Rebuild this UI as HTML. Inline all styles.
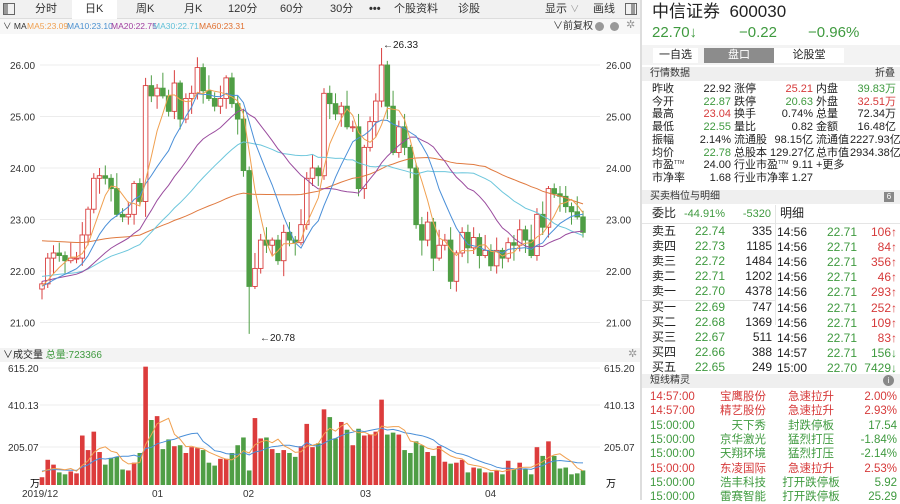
<!DOCTYPE html>
<html><head><meta charset="utf-8">
<style>
*{margin:0;padding:0;box-sizing:border-box}
body{width:900px;height:500px;overflow:hidden;background:#fff;font-family:"Liberation Sans","Noto Sans CJK SC",sans-serif;font-size:11px;color:#222;position:relative;line-height:13px}
.a{position:absolute;white-space:nowrap;line-height:13px}
.r{text-align:right}
.g{color:#3f9a3f}.red{color:#d63a3a}
.tm{font-size:5px;line-height:0;position:relative;top:-4px}
#tb{position:absolute;left:0;top:0;width:640px;height:19px;background:#f1f1f1;border-bottom:1px solid #ddd}
#tb span{position:absolute;top:3px;font-size:11px;color:#333;line-height:13px}
#mab{position:absolute;left:0;top:19px;width:640px;height:15px;background:#f7f7f7;font-size:8.5px}
#mab .a{top:2px;line-height:11px}
.hd{position:absolute;left:642px;width:258px;height:14px;background:#efefef;font-size:10px;color:#333;padding-left:8px;line-height:14px}
</style></head><body>
<div id="tb">
<div class="a" style="left:3px;top:3px;width:12px;height:12px;border:1px solid #666"></div><div class="a" style="left:4px;top:4px;width:4px;height:10px;background:#999"></div>
<div class="a" style="left:72px;top:0;width:45px;height:19px;background:#fff"></div>
<span style="left:35px">分时</span><span style="left:85px">日K</span><span style="left:136px">周K</span><span style="left:184px">月K</span><span style="left:228px">120分</span><span style="left:280px">60分</span><span style="left:330px">30分</span><span style="left:369px;font-weight:bold">•••</span><span style="left:394px">个股资料</span><span style="left:458px">诊股</span><span style="left:545px">显示 <small style="color:#999">∨</small></span><span style="left:593px">画线</span>
<div class="a" style="left:625px;top:3px;width:12px;height:12px;border:1px solid #666"></div><div class="a" style="left:631px;top:4px;width:4px;height:10px;background:#999"></div>
</div>
<div id="mab">
<span class="a" style="left:3px;color:#333">∨ MA</span>
<span class="a" style="left:27px;color:#f0a050">MA5:23.09</span>
<span class="a" style="left:67px;color:#4a90d0">MA10:23.10</span>
<span class="a" style="left:111px;color:#a040a0">MA20:22.75</span>
<span class="a" style="left:153px;color:#60c0d8">MA30:22.71</span>
<span class="a" style="left:199px;color:#e07030">MA60:23.31</span>
<span class="a" style="left:553px;color:#333;font-size:10px">∨前复权</span>
<span class="a" style="left:595px;top:3px;width:9px;height:9px;border-radius:50%;background:#999"></span>
<span class="a" style="left:610px;top:3px;width:9px;height:9px;border-radius:50%;background:#999"></span>
<span class="a" style="left:626px;top:1px;color:#999;font-size:11px">✲</span>
</div>
<svg id="ch" class="a" style="left:0;top:0" width="640" height="500"></svg>
<div class="a" style="left:0;top:348px;width:640px;height:14px;background:#f3f3f3"></div>
<span class="a" style="left:3px;top:349px;font-size:10px">∨成交量 <span class="g">总量:723366</span></span>
<span class="a" style="left:628px;top:348px;color:#999">✲</span>
<div class="a" style="left:640px;top:0;width:2px;height:500px;background:#ddd"></div>

<div class="a" style="left:652px;top:2px;font-size:17px;line-height:20px">中信证券&nbsp;&nbsp;600030</div>
<div class="a g" style="left:652px;top:24px;font-size:15px;line-height:18px">22.70↓</div>
<div class="a g" style="left:739px;top:24px;font-size:15px;line-height:18px">−0.22</div>
<div class="a g" style="left:808px;top:24px;font-size:15px;line-height:18px">−0.96%</div>
<div class="a" style="left:642px;top:45px;width:258px;height:20px;background:#f3f3f3"></div>
<div class="a" style="left:653px;top:48px;width:45px;height:15px;background:#fff;font-size:11px;text-align:center;line-height:15px">一自选</div>
<div class="a" style="left:704px;top:48px;width:70px;height:15px;background:#8c8c8c;color:#fff;font-size:11px;text-align:center;line-height:15px">盘口</div>
<div class="a" style="left:774px;top:48px;width:70px;height:15px;background:#fff;font-size:11px;text-align:center;line-height:15px">论股堂</div>
<div class="hd" style="top:67px">行情数据<span style="position:absolute;right:5px">折叠</span></div>
<div id="dt"></div>
<div class="hd" style="top:190px">买卖档位与明细<span style="position:absolute;right:6px;top:2px;width:10px;height:10px;background:#888;color:#fff;font-size:8px;line-height:10px;text-align:center">6</span></div>
<div class="a" style="left:775px;top:205px;width:1px;height:120px;background:#e5e5e5"></div>
<div class="a" style="left:642px;top:223px;width:258px;height:1px;background:#e5e5e5"></div>
<div class="a" style="left:642px;top:300px;width:133px;height:1px;background:#e5e5e5"></div>
<div id="ob"></div>
<div class="hd" style="top:374px">短线精灵<span style="position:absolute;right:6px;top:1px;width:11px;height:11px;border-radius:50%;background:#888;color:#fff;font-size:8px;line-height:11px;text-align:center">i</span></div>
<div id="se"></div>

<script>
function el(h,p){var d=document.createElement('div');d.innerHTML=h;document.getElementById(p).appendChild(d);}
var rows=[["昨收","22.92","","涨停","25.21","red","内盘","39.83万","g"],["今开","22.87","g","跌停","20.63","g","外盘","32.51万","red"],["最高","23.04","red","换手","0.74%","","总量","72.34万",""],["最低","22.55","g","量比","0.82","","金额","16.48亿",""],["振幅","2.14%","","流通股","98.15亿","","流通值","2227.93亿",""],["均价","22.78","g","总股本","129.27亿","","总市值","2934.38亿",""],["市盈<span class='tm'>TTM</span>","24.00","","行业市盈<span class='tm'>TTM</span>","9.11","","+更多","",""],["市净率","1.68","","行业市净率","1.27","","","",""]];
var h='';rows.forEach(function(r,i){var y=83+i*12.7;var st='line-height:12px;top:'+y+'px';
h+='<span class="a" style="left:652px;'+st+'">'+r[0]+'</span><span class="a r '+r[2]+'" style="left:690px;width:41px;'+st+'">'+r[1]+'</span>';
h+='<span class="a" style="left:734px;'+st+'">'+r[3]+'</span><span class="a r '+r[5]+'" style="left:770px;width:43px;'+st+'">'+r[4]+'</span>';
h+='<span class="a" style="left:816px;'+st+'">'+r[6]+'</span><span class="a r '+r[8]+'" style="left:850px;width:46px;'+st+'">'+r[7]+'</span>';});
el(h,'dt');
var ob=[["卖五","22.74","335","14:56","22.71","106↑"],["卖四","22.73","1185","14:56","22.71","84↑"],["卖三","22.72","1484","14:56","22.71","356↑"],["卖二","22.71","1202","14:56","22.71","46↑"],["卖一","22.70","4378","14:56","22.71","293↑"],["买一","22.69","747","14:56","22.71","252↑"],["买二","22.68","1369","14:56","22.71","109↑"],["买三","22.67","511","14:56","22.71","83↑"],["买四","22.66","388","14:57","22.71","156↓"],["买五","22.65","249","15:00","22.70","7429↓"]];
h='<span class="a" style="left:652px;top:207px;font-size:12px">委比</span><span class="a g" style="left:684px;top:208px">-44.91%</span><span class="a g r" style="left:730px;width:41px;top:208px">-5320</span><span class="a" style="left:780px;top:207px;font-size:12px">明细</span>';
ob.forEach(function(r,i){var y=225+i*15.1;var c=r[5].indexOf('↑')>0?'red':'g';
h+='<span class="a" style="left:652px;top:'+y+'px;font-size:12px">'+r[0]+'</span><span class="a g" style="left:695px;top:'+y+'px;font-size:12px">'+r[1]+'</span><span class="a r" style="left:730px;width:42px;top:'+y+'px;font-size:12px">'+r[2]+'</span><span class="a" style="left:777px;top:'+(y+1)+'px;font-size:12px">'+r[3]+'</span><span class="a g" style="left:827px;top:'+(y+1)+'px;font-size:12px">'+r[4]+'</span><span class="a r '+c+'" style="left:855px;width:42px;top:'+(y+1)+'px;font-size:12px">'+r[5]+'</span>';});
el(h,'ob');
var se=[["14:57:00","宝鹰股份","急速拉升","2.00%","red"],["14:57:00","精艺股份","急速拉升","2.93%","red"],["15:00:00","天下秀","封跌停板","17.54","g"],["15:00:00","京华激光","猛烈打压","-1.84%","g"],["15:00:00","天翔环境","猛烈打压","-2.14%","g"],["15:00:00","东凌国际","急速拉升","2.53%","red"],["15:00:00","浩丰科技","打开跌停板","5.92","g"],["15:00:00","雷赛智能","打开跌停板","25.29","g"]];
h='';se.forEach(function(r,i){var y=391+i*14.3;
h+='<span class="a '+r[4]+'" style="left:650px;top:'+y+'px;font-size:11.5px">'+r[0]+'</span><span class="a r '+r[4]+'" style="left:700px;width:66px;top:'+y+'px;font-size:11.5px">'+r[1]+'</span><span class="a '+r[4]+'" style="left:776px;width:70px;text-align:center;top:'+y+'px;font-size:11.5px">'+r[2]+'</span><span class="a r '+r[4]+'" style="left:850px;width:47px;top:'+y+'px;font-size:11.5px">'+r[3]+'</span>';});
el(h,'se');

var C=[21.75,22.25,22.35,22.3,22.2,22.25,22.25,22.7,23.2,23.8,23.85,23.8,23.6,23.1,23.05,23.1,23.7,23.35,25.6,25.4,25.55,25.4,25.1,25.65,24.95,25.35,25.45,25.95,25.5,25.35,25.2,25.35,25.75,25.25,24.95,23.95,21.7,22.05,22.6,22.5,22.6,22.2,22.75,22.6,22.55,22.9,23.8,24.0,23.85,25.45,25.25,25.05,25.2,24.8,24.8,23.6,24.4,24.9,25.3,26.0,25.2,24.3,24.8,24.4,24.0,22.9,22.6,22.95,22.25,22.5,22.6,21.8,22.35,22.75,22.45,22.65,22.3,22.4,22.1,22.4,22.25,22.55,22.5,22.8,22.6,22.3,23.1,22.85,23.6,23.5,23.45,23.25,23.15,23.05,22.75];
var V=[8,26,21,13,11,14,12,51,36,55,34,21,28,29,16,15,23,33,122,67,71,37,47,40,41,33,39,38,36,23,20,27,27,33,41,49,15,69,48,49,37,33,36,33,29,40,63,39,43,78,70,48,65,57,41,58,51,52,55,88,52,54,52,36,33,45,41,34,30,40,24,22,23,26,13,18,17,13,13,15,11,25,16,23,17,11,39,30,45,30,17,18,11,12,15];
var n=C.length,x0=42,x1=583,st=(x1-x0)/(n-1);
function X(i){return x0+i*st}function Y(p){return 65+(26-p)*51.5}
var s='';
[26,25,24,23,22,21].forEach(function(p){var y=Y(p);s+='<line x1="40" x2="600" y1="'+y+'" y2="'+y+'" stroke="#ececec"/><text x="10" y="'+(y+4)+'" font-size="10" fill="#333">'+p.toFixed(2)+'</text><text x="606" y="'+(y+4)+'" font-size="10" fill="#333">'+p.toFixed(2)+'</text>';});
[[368,"615.20"],[405,"410.13"],[447,"205.07"]].forEach(function(a){s+='<line x1="40" x2="600" y1="'+a[0]+'" y2="'+a[0]+'" stroke="#ececec"/><text x="8" y="'+(a[0]+4)+'" font-size="10" fill="#333">'+a[1]+'</text><text x="604" y="'+(a[0]+4)+'" font-size="10" fill="#333">'+a[1]+'</text>';});
s+='<text x="30" y="487" font-size="10">万</text><text x="606" y="487" font-size="10">万</text>';
[[22,"2019/12"],[152,"01"],[243,"02"],[360,"03"],[485,"04"]].forEach(function(a){s+='<text x="'+a[0]+'" y="497" font-size="10" fill="#333">'+a[1]+'</text>';});
var dy=[.05,.1,.15,.2,.08,.3,.12,.25];
var rc='#d94040',gc='#4f9e45';
for(var i=0;i<n;i++){var o=i?C[i-1]:21.65,c=C[i];var up=c>=o;var hi=Math.max(o,c)+dy[i%8],lo=Math.min(o,c)-dy[(i+3)%8];
if(i==59)hi=26.33;if(i==36)lo=20.78;
var x=X(i),col=up?rc:gc;var t=Y(Math.max(o,c)),b=Y(Math.min(o,c));if(b-t<1)b=t+1;
s+='<line x1="'+x+'" x2="'+x+'" y1="'+Y(hi)+'" y2="'+Y(lo)+'" stroke="'+col+'"/>';
s+='<rect x="'+(x-2.3)+'" y="'+t+'" width="4.6" height="'+(b-t)+'" fill="'+(up?'#fff':gc)+'" stroke="'+col+'" stroke-width="0.9"/>';
if(i<V.length){var vh=V[i]*0.97;s+='<rect x="'+(x-2.3)+'" y="'+(485-vh)+'" width="4.6" height="'+vh+'" fill="'+(up?'#dc3c3c':'#4f9e45')+'"/>';}}
function ma(arr,k,pad){var r=[];for(var i=0;i<arr.length;i++){var sm=0;for(var j=i-k+1;j<=i;j++)sm+=(j<0?pad:arr[j]);r.push(sm/k);}return r;}
function line(arr,f,col){var d='';arr.forEach(function(v,i){d+=(i?'L':'M')+X(i).toFixed(1)+' '+f(v).toFixed(1);});return '<path d="'+d+'" fill="none" stroke="'+col+'" stroke-width="1"/>';}
s+=line(ma(C,60,22.6),Y,'#e07a40');s+=line(ma(C,30,21.9),Y,'#6cc6dc');s+=line(ma(C,20,21.8),Y,'#9a4c9e');s+=line(ma(C,10,21.7),Y,'#4a8fd8');s+=line(ma(C,5,21.7),Y,'#f0a050');
var vf=function(v){return 485-v*0.97};
s+=line(ma(V,10,15),vf,'#4a8fd8');s+=line(ma(V,5,15),vf,'#f0a050');
s+='<text x="383" y="48" font-size="10" fill="#222">←26.33</text><text x="260" y="341" font-size="10" fill="#222">←20.78</text>';
document.getElementById('ch').innerHTML=s;
</script>
</body></html>
